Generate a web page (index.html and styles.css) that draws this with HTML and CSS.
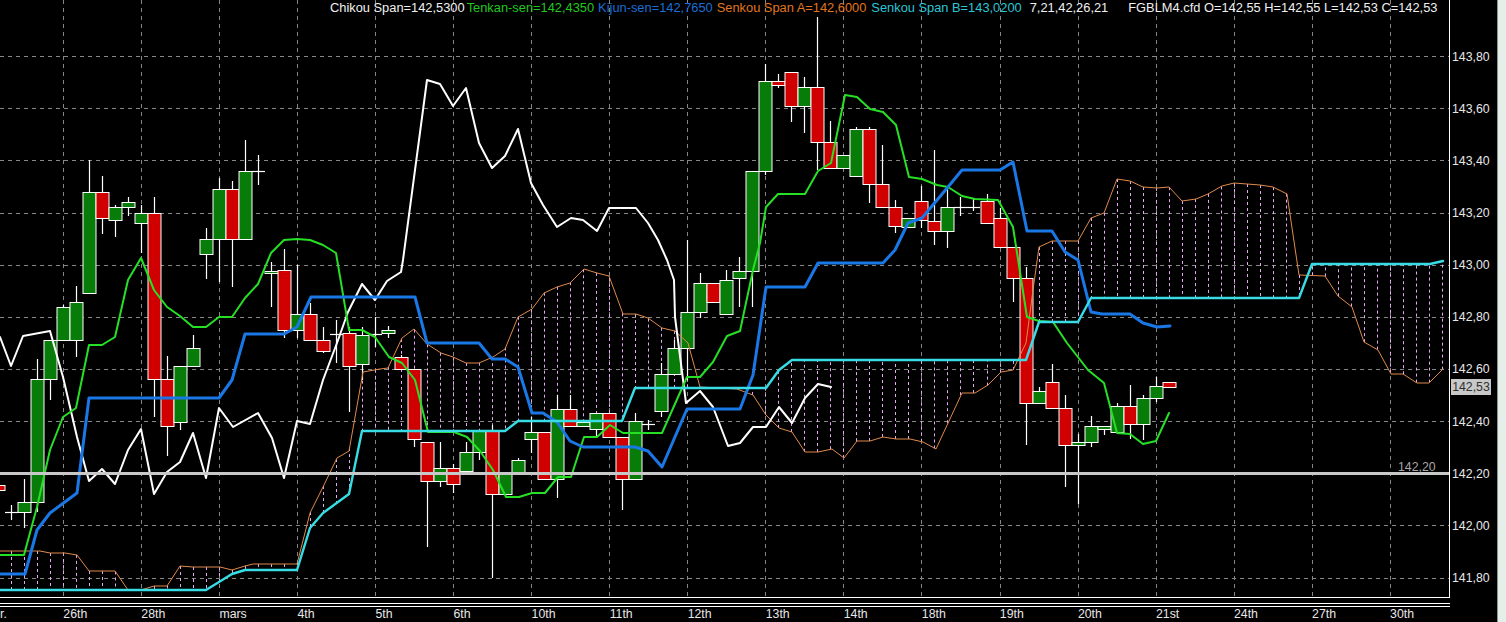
FILE: index.html
```html
<!DOCTYPE html>
<html lang="fr">
<head>
<meta charset="utf-8">
<title>FGBLM4.cfd Ichimoku</title>
<link rel="stylesheet" href="styles.css">
</head>
<body>
<main class="terminal">
  <section class="chart-col">
    <div class="plot">
      <svg id="chart" class="chart-svg" width="1449" height="597" viewBox="0 0 1449 597" xmlns="http://www.w3.org/2000/svg"></svg>
      <div class="legend">
        <span class="lg-white">Chikou Span=142,5300</span>
        <span class="lg-green">Tenkan-sen=142,4350</span>
        <span class="lg-blue">Kijun-sen=142,7650</span>
        <span class="lg-orange">Senkou Span A=142,6000</span>
        <span class="lg-cyan">Senkou Span B=143,0200</span>
        <span class="lg-white lg-params">7,21,42,26,21</span>
        <span class="lg-white lg-ohlc">FGBLM4.cfd O=142,55 H=142,55 L=142,53 C=142,53</span>
      </div>
      <div class="hline-label">142,20</div>
    </div>
    <div class="time-axis">
      <span class="first-tick">r.</span>
      <span>26th</span><span>28th</span><span>mars</span><span>4th</span><span>5th</span><span>6th</span>
      <span>10th</span><span>11th</span><span>12th</span><span>13th</span><span>14th</span><span>18th</span>
      <span>19th</span><span>20th</span><span>21st</span><span>24th</span><span>27th</span><span>30th</span>
    </div>
  </section>
  <aside class="price-axis">
    <span>143,80</span><span>143,60</span><span>143,40</span><span>143,20</span><span>143,00</span><span>142,80</span>
    <span>142,60</span><span>142,40</span><span>142,20</span><span>142,00</span><span>141,80</span>
    <div class="price-tag">142,53</div>
  </aside>
  <div class="window-frame"></div>
</main>
<script src="chart.js"></script>
</body>
</html>
```
FILE: styles.css
```css
* { box-sizing: border-box; }
html, body { margin: 0; height: 100%; background: #000; overflow: hidden; }
body { font-family: "Liberation Sans", Arial, sans-serif; font-size: 12.3px; color: #e8e8e8; }

.terminal { display: flex; width: 1506px; height: 622px; background: #000; }
.chart-col { display: flex; flex-direction: column; width: 1450px; flex: none; }

.plot {
  position: relative;
  height: 598px;
  border-right: 1px solid #fff;
  border-bottom: 1px solid #fff;
  overflow: hidden;
}
.chart-svg { display: block; }

.legend {
  position: absolute;
  top: 0;
  left: 330px;
  display: flex;
  gap: 2px;
  font-size: 12.85px;
  line-height: 15px;
  white-space: nowrap;
}
.lg-white { color: #f0f0f0; }
.lg-green { color: #20c820; }
.lg-blue { color: #1b6fd6; margin-left: 2px; }
.lg-orange { color: #e0761e; margin-left: 2px; }
.lg-cyan { color: #2cc6d6; margin-left: 3px; }
.lg-params { margin-left: 6px; }
.lg-ohlc { margin-left: 18px; }

.hline-label {
  position: absolute;
  top: 460px;
  left: 1398px;
  color: #a6a6a6;
  line-height: 15px;
}

.time-axis {
  display: flex;
  margin-top: 5px;
  border-top: 1px solid #fff;
  height: 19px;
  line-height: 15px;
  color: #e8e8e8;
  box-shadow: inset 0 2px 0 #000, inset 0 3px 0 #fff;
}
.time-axis span { flex: none; width: 78.06px; padding-top: 3px; white-space: nowrap; }
.time-axis .first-tick { width: 63.3px; }

.price-axis {
  position: relative;
  display: flex;
  flex-direction: column;
  width: 47px;
  flex: none;
  padding: 30.7px 0 0 2px;
}
.price-axis span {
  flex: none;
  height: 52.13px;
  line-height: 52.13px;
  color: #e8e8e8;
}
.price-tag {
  position: absolute;
  top: 379px;
  left: 1px;
  width: 40px;
  height: 16px;
  background: #c8c8c8;
  color: #303030;
  line-height: 16px;
  text-align: center;
}

.window-frame {
  flex: 1;
  background: #e6eee9;
  border-left: 1px solid #8d9490;
}
```
FILE: chart.js
```js
(function () {
  var NS = 'http://www.w3.org/2000/svg';
  var svg = document.getElementById('chart');

  function el(name, attrs) {
    var n = document.createElementNS(NS, name);
    for (var k in attrs) n.setAttribute(k, attrs[k]);
    svg.appendChild(n);
    return n;
  }
  function px(v) { return Math.floor(v) + 0.5; }
  function barX(k) { return 63.3 + 13.01 * k; }

  // Grid
  var i;
  for (i = 0; i < 18; i++) {
    var gx = px(63.3 + 78.06 * i);
    el('line', { x1: gx, x2: gx, y1: 0, y2: 597, stroke: '#868686', 'stroke-dasharray': '4 4' });
  }
  for (i = 0; i < 11; i++) {
    var gy = px(56.6 + 52.15 * i);
    el('line', { x1: 0, x2: 1449, y1: gy, y2: gy, stroke: '#868686', 'stroke-dasharray': '4 4' });
  }

  // Ichimoku lines, pixel coordinates
  var senkouA = [[0,551],[40,551],[50,553],[65,553],[77,555],[89,571],[115,571],[128,590],[141,590],[154,586],[167,586],[180,566],[193,567],[220,567],[232,570],[245,566],[253,564],[297,564],[310,513],[323,487],[337,458],[349,451],[363,372],[380,369],[388,368],[402,338],[414,329],[427,344],[441,353],[453,357],[466,363],[479,363],[493,357],[505,349],[518,317],[532,309],[544,293],[557,287],[570,283],[584,269],[597,273],[609,276],[623,314],[636,314],[648,318],[662,328],[675,331],[688,343],[700,387],[737,389],[753,395],[766,415],[779,428],[792,432],[805,452],[818,452],[832,449],[844,458],[857,441],[870,441],[883,437],[896,439],[910,439],[923,442],[936,449],[962,393],[975,393],[988,385],[1001,372],[1013,370],[1026,343],[1033,290],[1039,247],[1052,241],[1078,241],[1091,218],[1104,213],[1117,179],[1130,181],[1143,187],[1157,188],[1169,187],[1182,201],[1196,199],[1208,194],[1222,186],[1234,183],[1260,185],[1273,187],[1287,194],[1299,275],[1325,276],[1338,296],[1352,307],[1364,342],[1378,350],[1391,374],[1403,374],[1417,383],[1429,383],[1443,369]];
  var senkouB = [[0,590],[206,590],[219,582],[232,574],[245,570],[297,570],[310,528],[323,513],[349,494],[362,431],[505,431],[518,421],[622,421],[635,388],[766,388],[779,370],[792,360],[1026,360],[1039,322],[1078,322],[1091,298],[1299,298],[1312,264],[1430,264],[1443,261]];
  var tenkan = [[0,555],[24,555],[37,507],[50,450],[63,417],[76,408],[89,345],[102,345],[115,337],[128,280],[141,258],[154,290],[167,307],[180,316],[193,327],[206,327],[219,317],[232,317],[245,298],[258,284],[271,253],[284,240],[297,239],[310,240],[323,245],[336,253],[349,330],[362,330],[375,337],[389,357],[402,363],[415,380],[428,432],[454,432],[467,437],[480,451],[493,470],[506,497],[519,497],[532,493],[545,493],[558,477],[571,477],[584,437],[597,437],[610,425],[623,433],[662,433],[687,377],[700,377],[713,362],[727,336],[740,331],[753,270],[760,243],[766,207],[778,194],[805,194],[818,171],[831,163],[845,95],[857,97],[870,109],[883,112],[896,125],[909,177],[922,179],[937,185],[948,187],[962,196],[975,199],[998,200],[1013,227],[1027,317],[1039,321],[1053,322],[1067,343],[1088,370],[1104,383],[1117,433],[1130,434],[1143,444],[1156,441],[1169,413]];
  var kijun = [[0,574],[25,574],[37,530],[50,513],[77,493],[89,398],[219,398],[232,380],[245,334],[284,334],[297,327],[311,297],[415,297],[427,343],[479,343],[492,359],[505,359],[518,367],[532,413],[543,413],[557,422],[570,441],[583,447],[635,447],[648,451],[662,467],[687,409],[740,409],[753,375],[766,287],[805,287],[818,263],[883,263],[895,250],[908,223],[922,218],[948,187],[962,170],[1000,170],[1013,162],[1027,231],[1052,231],[1065,252],[1078,260],[1091,312],[1102,314],[1130,314],[1143,323],[1157,327],[1170,326]];
  var chikou = [[0,337],[11,366],[23,336],[50,331],[63,377],[77,437],[89,481],[102,469],[115,484],[128,450],[141,429],[154,494],[167,472],[180,462],[193,433],[206,478],[219,408],[233,427],[258,413],[272,438],[284,478],[297,421],[310,424],[323,380],[337,343],[348,312],[362,284],[375,300],[387,281],[401,272],[403,260],[427,80],[440,84],[453,106],[466,88],[479,143],[492,168],[505,156],[518,129],[531,183],[543,205],[557,227],[571,218],[583,220],[597,231],[609,208],[636,208],[648,223],[658,240],[667,260],[674,280],[675,317],[686,403],[700,391],[713,407],[728,446],[740,443],[753,427],[766,427],[779,407],[792,423],[805,398],[818,384],[831,387]];

  function at(line, x) {
    for (var j = 0; j < line.length - 1; j++) {
      var a = line[j], b = line[j + 1];
      if (x >= a[0] && x <= b[0]) return a[1] + (b[1] - a[1]) * (x - a[0]) / (b[0] - a[0]);
    }
    return null;
  }

  // Cloud hatching, one dashed stroke per bar
  for (var h = -4; h <= 106; h++) {
    var hx = barX(h);
    var ya = at(senkouA, hx), yb = at(senkouB, hx);
    if (ya === null || yb === null || Math.abs(ya - yb) < 3) continue;
    el('line', { x1: px(hx), x2: px(hx), y1: ya, y2: yb, stroke: '#e6a8f0', 'stroke-dasharray': '3 3' });
  }

  // Candles: [type, bodyTop, bodyBottom, wickTop, wickBottom], starting at bar -5
  var bars = [
    ['r',485,490,485,490],['d',512,512,505,520],['g',502,512,479,528],['g',379,502,359,512],['g',340,379,340,400],
    ['g',307,340,305,340],['g',302,340,286,357],['g',192,293,160,293],['r',192,218,176,234],['g',207,220,205,237],
    ['g',202,207,197,216],['g',213,223,205,253],['r',213,379,197,417],['r',379,426,356,456],['g',366,422,366,430],
    ['g',348,366,335,366],['g',239,254,228,279],['g',189,239,178,282],['r',189,239,181,287],['g',171,239,140,239],
    ['d',171,171,155,185],['g',271,273,262,307],['r',270,330,249,338],['g',314,330,265,338],['r',314,340,303,340],
    ['r',340,351,327,353],['d',334,334,320,363],['r',333,366,327,412],['g',335,364,327,380],['d',334,334,317,347],
    ['g',330,333,326,338],['r',357,369,355,369],['r',369,439,369,447],['r',442,481,442,547],['g',468,481,442,487],
    ['r',468,484,464,493],['g',452,471,442,471],['g',430,452,430,460],['r',431,494,425,578],['g',472,494,472,494],
    ['g',460,472,458,472],['g',432,439,417,453],['r',432,479,432,479],['g',409,479,395,498],['r',409,426,395,426],
    ['g',422,426,422,426],['g',413,429,413,438],['r',413,437,413,437],['r',437,479,437,510],['g',421,479,413,479],
    ['d',424,424,420,430],['g',374,411,363,417],['g',348,374,340,374],['g',312,348,240,380],['g',283,312,273,318],
    ['r',283,302,283,302],['g',280,314,270,314],['g',271,278,257,307],['g',171,271,171,307],['g',81,171,64,175],
    ['r',81,85,74,88],['r',72,106,72,122],['g',87,106,77,133],['r',87,142,17,170],['r',142,168,121,168],
    ['g',155,168,155,168],['g',129,176,127,176],['r',129,184,127,203],['r',184,207,145,207],['r',207,226,200,233],
    ['g',218,227,218,227],['r',201,220,186,228],['r',221,231,150,245],['g',207,231,188,248],['d',207,207,197,216],
    ['d',207,207,199,211],['r',201,223,194,223],['r',218,247,208,247],['r',247,278,247,302],['r',278,403,267,445],
    ['g',391,403,387,403],['r',382,408,364,408],['r',408,445,395,487],['g',442,445,434,504],['g',426,442,416,447],
    ['g',426,429,426,435],['g',406,432,403,432],['r',406,424,385,439],['g',398,424,395,440],['g',386,398,377,402],
    ['r',382,387,382,387]
  ];
  bars.forEach(function (b, n) {
    var cx = barX(n - 5), x = px(cx);
    el('line', { x1: x, x2: x, y1: b[3], y2: b[4], stroke: '#fff', 'stroke-width': 1.2 });
    if (b[0] === 'd') {
      el('line', { x1: x - 6.5, x2: x + 6.5, y1: px(b[1]), y2: px(b[1]), stroke: '#fff', 'stroke-width': 1.2 });
    } else {
      el('rect', {
        x: x - 6.5, y: px(b[1]), width: 13, height: b[2] - b[1],
        fill: b[0] === 'g' ? '#087c08' : '#d00000', stroke: '#fff', 'stroke-width': 1
      });
    }
  });

  function poly(line, colour, width) {
    el('polyline', {
      points: line.map(function (p) { return p.join(','); }).join(' '),
      fill: 'none', stroke: colour, 'stroke-width': width,
      'stroke-linejoin': 'round', 'stroke-linecap': 'round'
    });
  }
  poly(senkouA, '#e08a4a', 1);
  poly(chikou, '#ffffff', 2);
  poly(tenkan, '#26e026', 2);
  poly(kijun, '#1a78e6', 3);
  poly(senkouB, '#38dce4', 2.4);

  // Horizontal level
  el('rect', { x: 0, y: 472, width: 1449, height: 3, fill: '#c8c8c8' });
})();
```
